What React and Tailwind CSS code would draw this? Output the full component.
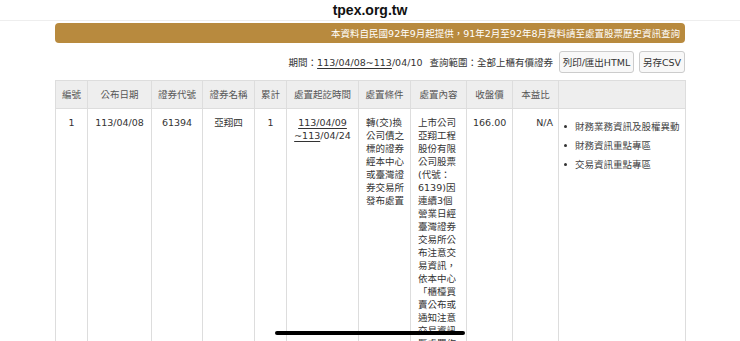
import React from 'react';

const cols = [32, 64, 51, 52, 32, 72, 52, 56, 46, 46, 127];
const heads = ['編號', '公布日期', '證券代號', '證券名稱', '累計', '處置起訖時間', '處置條件', '處置內容', '收盤價', '本益比', ''];

const conditionLines = ['轉(交)換', '公司債之', '標的證券', '經本中心', '或臺灣證', '券交易所', '發布處置'];
const contentText =
  '上市公司亞翔工程股份有限公司股票(代號：6139)因連續3個營業日經臺灣證券交易所公布注意交易資訊，依本中心「櫃檯買賣公布或通知注意交易資訊暨處置作業要點」第四條規定';
const links = ['財務業務資訊及股權異動', '財務資訊重點專區', '交易資訊重點專區'];

const App = () => {
  return (
    <div className="relative h-[341px] w-[740px] overflow-hidden bg-white font-['DejaVu_Sans','Noto_Sans_CJK_TC',sans-serif] text-[9.5px] leading-[13px] text-[#333]">
      {/* address bar */}
      <div className="flex h-[21px] items-center justify-center border-b border-[#eee]">
        <span className="font-['Liberation_Sans',sans-serif] text-[14px] font-bold leading-none text-[#111]">tpex.org.tw</span>
      </div>

      <div className="mx-auto w-[630px]">
        {/* notice */}
        <div className="mt-[2px] flex h-[20px] items-center justify-end rounded-[4px] bg-[#b88a3e] pr-[5px] text-white">
          本資料自民國92年9月起提供，91年2月至92年8月資料請至處置股票歷史資訊查詢
        </div>

        {/* query bar */}
        <div className="mt-[8px] flex h-[22px] items-center justify-end">
          <span>
            期間：<span className="underline underline-offset-2">113/04/08~113</span>/04/10
          </span>
          <span className="ml-[7px]">查詢範圍：全部上櫃有價證券</span>
          <button className="ml-[6px] flex h-[22px] w-[75px] items-center justify-center rounded-[3px] border border-[#ccc] bg-[#f8f8f8] text-[#333]">
            列印/匯出HTML
          </button>
          <button className="ml-[5px] flex h-[22px] w-[46px] items-center justify-center rounded-[3px] border border-[#ccc] bg-[#f8f8f8] text-[#333]">
            另存CSV
          </button>
        </div>

        {/* results */}
        <table className="mt-[7px] w-[630px] table-fixed border-collapse">
          <colgroup>
            {cols.map((w, i) => (
              <col key={i} style={{ width: w }} />
            ))}
          </colgroup>
          <thead>
            <tr>
              {heads.map((h, i) => (
                <th key={i} className="border border-[#ddd] bg-[#eee] py-[7px] text-center font-normal text-[#555]">
                  {h}
                </th>
              ))}
            </tr>
          </thead>
          <tbody>
            <tr className="align-top">
              <td className="h-[400px] border-x border-[#ddd] py-[7px] text-center">1</td>
              <td className="border-x border-[#ddd] py-[7px] text-center">113/04/08</td>
              <td className="border-x border-[#ddd] py-[7px] text-center">61394</td>
              <td className="border-x border-[#ddd] py-[7px] text-center">亞翔四</td>
              <td className="border-x border-[#ddd] py-[7px] text-center">1</td>
              <td className="border-x border-[#ddd] py-[7px] text-center">
                <span className="underline underline-offset-2">113/04/09</span>
                <br />
                <span className="underline underline-offset-2">~113</span>/04/24
              </td>
              <td className="border-x border-[#ddd] py-[7px] pl-[7px] pr-[4px] text-left">
                {conditionLines.map((l) => (
                  <div key={l}>{l}</div>
                ))}
              </td>
              <td className="border-x border-[#ddd] py-[7px] pl-[7px] pr-[6px] text-left">{contentText}</td>
              <td className="border-x border-[#ddd] py-[7px] pl-[6px] text-left">166.00</td>
              <td className="border-x border-[#ddd] py-[7px] pr-[5px] text-right">N/A</td>
              <td className="border-x border-[#ddd] py-[7px] pl-[4px]">
                <ul className="mt-[4px] flex flex-col gap-[6px] text-[#444]">
                  {links.map((l) => (
                    <li key={l} className="flex items-center">
                      <span className="ml-[1px] mr-[8px] h-[3px] w-[3px] rounded-full bg-[#333]" />
                      {l}
                    </li>
                  ))}
                </ul>
              </td>
            </tr>
          </tbody>
        </table>
      </div>

      {/* home indicator */}
      <div className="absolute left-[275px] top-[331px] h-[4px] w-[190px] rounded-full bg-black" />
    </div>
  );
};

export default App;
